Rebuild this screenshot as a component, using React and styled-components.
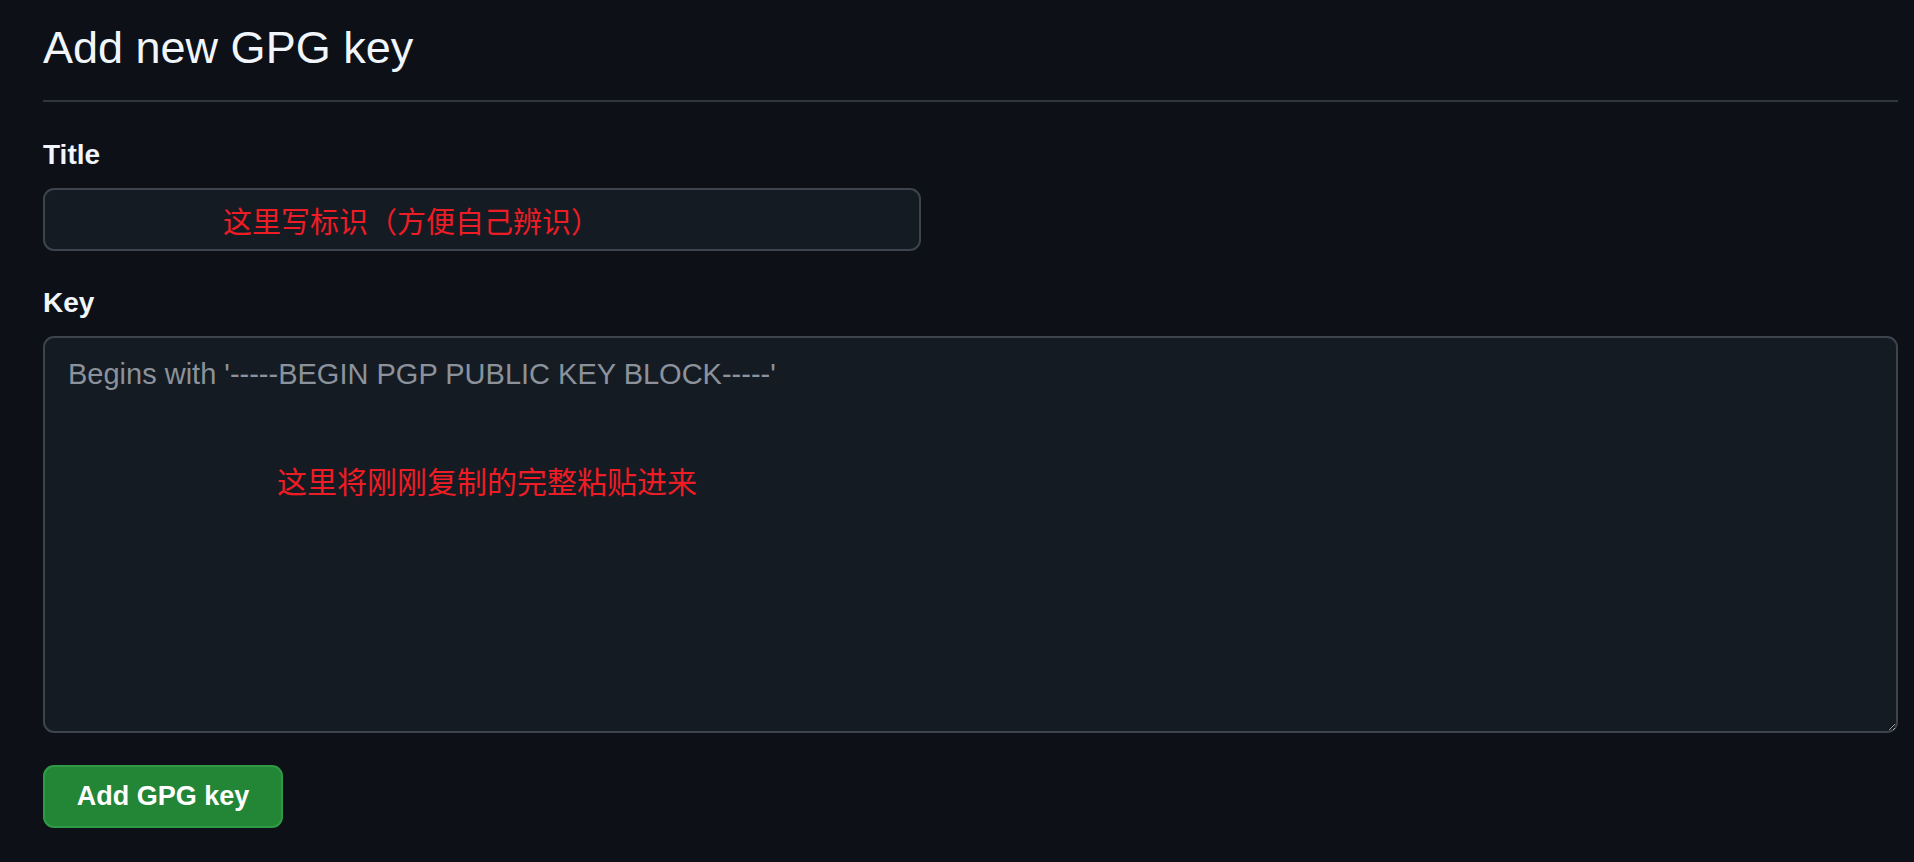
import React from 'react'
import styled, { createGlobalStyle } from 'styled-components'

const GlobalStyle = createGlobalStyle`
  html, body {
    margin: 0;
    padding: 0;
    background: #0d1117;
    color-scheme: dark;
  }
  body {
    font-family: "Liberation Sans", Arial, "Noto Sans CJK SC", sans-serif;
    color: #f0f6fc;
  }
`

const Page = styled.main`
  padding: 20px 16px 0 43px;
`

const Header = styled.header`
  padding-bottom: 24px;
  border-bottom: 2px solid #30363d;
`

const Heading = styled.h2`
  margin: 0;
  font-size: 45px;
  line-height: 56px;
  font-weight: 400;
  color: #f0f6fc;
`

const Form = styled.form`
  display: flex;
  flex-direction: column;
  align-items: flex-start;
`

const Field = styled.div`
  display: flex;
  flex-direction: column;
  gap: 15px;
  margin-top: ${(p) => p.$gap || 34}px;
  width: ${(p) => p.$width || '100%'};
`

const Label = styled.label`
  font-size: 28px;
  line-height: 36px;
  font-weight: 700;
  color: #f0f6fc;
`

const Control = styled.div`
  position: relative;
`

const TextInput = styled.input`
  box-sizing: border-box;
  width: 100%;
  height: 63px;
  padding: 0 23px;
  background: #151b23;
  border: 2px solid #3d444d;
  border-radius: 11px;
  color: #f0f6fc;
  font: 28px "Liberation Sans", Arial, sans-serif;
  outline: none;
`

const TextArea = styled.textarea`
  display: block;
  box-sizing: border-box;
  width: 100%;
  height: 397px;
  padding: 18px 23px;
  background: #151b23;
  border: 2px solid #3d444d;
  border-radius: 11px;
  color: #f0f6fc;
  font: 29px/36px "Liberation Sans", Arial, sans-serif;
  resize: vertical;
  outline: none;
  &::placeholder {
    color: #8b929b;
  }
`

/* red notes drawn over the screenshot */
const Note = styled.span`
  position: absolute;
  left: ${(p) => p.$left}px;
  top: ${(p) => p.$top}px;
  font-family: "Noto Sans CJK SC", sans-serif;
  font-size: ${(p) => p.$size}px;
  line-height: 1;
  color: #ee1c24;
  white-space: nowrap;
  pointer-events: none;
`

const SubmitButton = styled.button`
  margin-top: 32px;
  width: 240px;
  height: 63px;
  background: #238636;
  border: 2px solid #2f9a45;
  border-radius: 11px;
  color: #ffffff;
  font: 700 27px "Liberation Sans", Arial, sans-serif;
  cursor: pointer;
`

export default function App() {
  return (
    <>
      <GlobalStyle />
      <Page>
        <Header>
          <Heading>Add new GPG key</Heading>
        </Header>
        <Form onSubmit={(e) => e.preventDefault()}>
          <Field $gap={35} $width="878px">
            <Label htmlFor="title">Title</Label>
            <Control>
              <TextInput id="title" type="text" />
              <Note $left={180} $top={18} $size={29}>这里写标识（方便自己辨识）</Note>
            </Control>
          </Field>
          <Field $gap={34}>
            <Label htmlFor="key">Key</Label>
            <Control>
              <TextArea id="key" placeholder="Begins with '-----BEGIN PGP PUBLIC KEY BLOCK-----'" />
              <Note $left={234} $top={129} $size={30}>这里将刚刚复制的完整粘贴进来</Note>
            </Control>
          </Field>
          <SubmitButton type="submit">Add GPG key</SubmitButton>
        </Form>
      </Page>
    </>
  )
}
